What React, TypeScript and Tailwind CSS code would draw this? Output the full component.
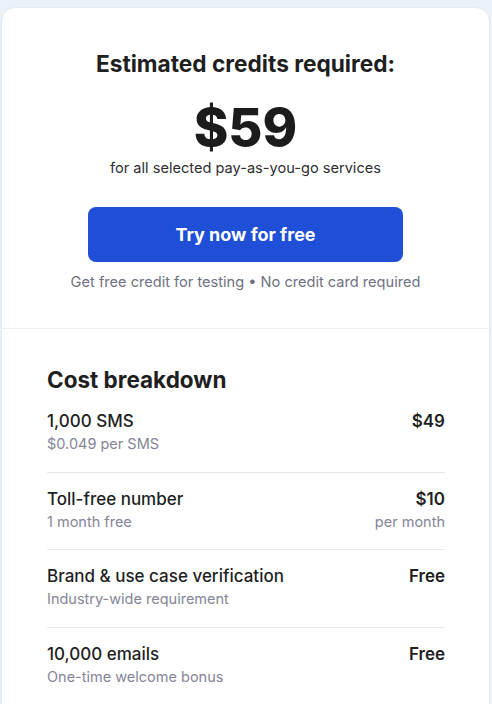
import React from "react";

const rows = [
  { t: "1,000 SMS", s: "$0.049 per SMS", p: "$49", ps: "" },
  { t: "Toll-free number", s: "1 month free", p: "$10", ps: "per month" },
  { t: "Brand & use case verification", s: "Industry-wide requirement", p: "Free", ps: "" },
  { t: "10,000 emails", s: "One-time welcome bonus", p: "Free", ps: "" },
];

export default function App() {
  return (
    <div
      className="min-h-[704px] w-[492px] bg-[#eaf1f9] pt-[7px] pl-[1px] pr-[2px] overflow-hidden"
      style={{ fontFamily: "Inter, 'Noto Sans', sans-serif" }}
    >
      <div className="h-[700px] rounded-t-[14px] border border-[#e6e9ee] bg-white">
        <div className="flex flex-col items-center px-6 pt-[42px] pb-[36px] border-b border-[#eceef2]">
          <h2 className="text-[22.7px] leading-[28px] font-bold text-[#1f1f1f]">
            Estimated credits required:
          </h2>
          <div className="mt-[25px] text-[52.5px] leading-[48px] font-extrabold text-[#1c1c1c]">
            $59
          </div>
          <p className="mt-[7px] text-[14.6px] leading-[20px] text-[#2e2e33]">
            for all selected pay-as-you-go services
          </p>
          <button className="mt-[29px] h-[55px] w-[315px] rounded-[8px] bg-[#1f4fd6] text-[18px] font-bold text-white">
            Try now for free
          </button>
          <p className="mt-[10px] text-[14.6px] leading-[20px] text-[#6f7180]">
            Get free credit for testing • No credit card required
          </p>
        </div>
        <div className="pl-[45px] pr-[44px] pt-[37px]">
          <h3 className="mb-[1px] text-[22.5px] leading-[28px] font-bold text-[#1f1f1f]">Cost breakdown</h3>
          <div className="flex flex-col">
            {rows.map((r, i) => (
              <div
                key={i}
                className={`flex justify-between pt-[14px] pb-[17.5px] ${i > 0 ? "border-t border-[#e8e9ed]" : ""}`}
              >
                <div className="flex flex-col">
                  <span className="text-[17px] leading-[25px] font-medium text-[#1f1f1f]">{r.t}</span>
                  <span className="text-[14.5px] leading-[20px] text-[#858597]">{r.s}</span>
                </div>
                <div className="flex flex-col items-end">
                  <span className="text-[17px] leading-[25px] font-semibold text-[#1f1f1f]">{r.p}</span>
                  {r.ps && <span className="text-[14.5px] leading-[20px] text-[#858597]">{r.ps}</span>}
                </div>
              </div>
            ))}
          </div>
        </div>
      </div>
    </div>
  );
}
